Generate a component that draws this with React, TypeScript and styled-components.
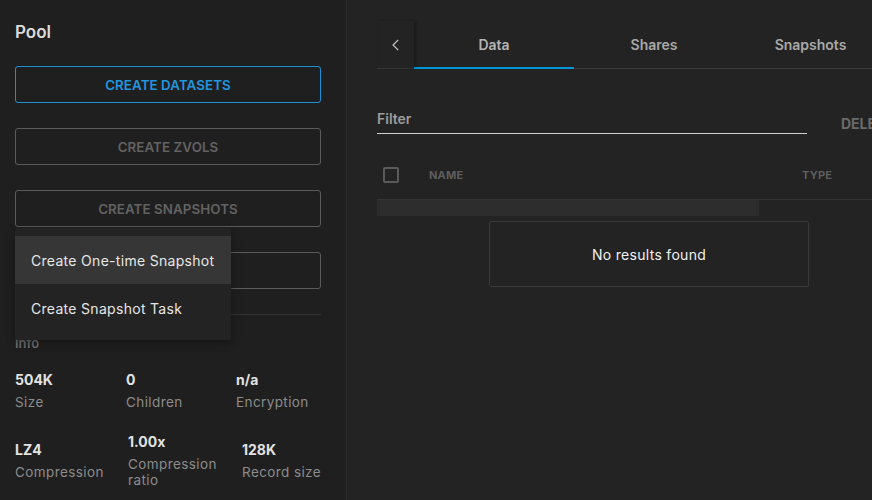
import React from "react";
import styled, { createGlobalStyle } from "styled-components";

const Global = createGlobalStyle`
  html, body { margin: 0; padding: 0; background: #232323; }
  body { font-family: Inter, "Noto Sans", sans-serif; -webkit-font-smoothing: antialiased; }
  * { box-sizing: border-box; }
`;

const Page = styled.div`
  display: flex;
  width: 872px;
  height: 500px;
  overflow: hidden;
  background: #232323;
`;

const Sidebar = styled.aside`
  flex: 0 0 347px;
  background: #1f1f1f;
  border-right: 1px solid #2c2c2c;
  padding: 20px 25px 0 15px;
  display: flex;
  flex-direction: column;
`;

const Title = styled.h2`
  margin: 0;
  font-size: 17px;
  font-weight: 600;
  line-height: 24px;
  color: #dcdcdc;
`;

const ButtonStack = styled.div`
  margin-top: 22px;
  display: flex;
  flex-direction: column;
  gap: 25px;
`;

const Anchor = styled.div`
  position: relative;
`;

const ActionButton = styled.button<{ $primary?: boolean }>`
  width: 100%;
  height: 37px;
  background: transparent;
  border: 1px solid ${(p) => (p.$primary ? "#1b8ed4" : "#5b5b5b")};
  border-radius: 3px;
  color: ${(p) => (p.$primary ? "#2196e0" : "#626262")};
  font-family: Inter, sans-serif;
  font-size: 13.3px;
  font-weight: 600;
  letter-spacing: 0.1px;
  text-transform: uppercase;
  padding: 0;
`;

const Menu = styled.div`
  position: absolute;
  left: 0;
  top: calc(100% + 1px);
  width: 216px;
  padding: 8px 0;
  background: #232323;
  border-radius: 3px;
  box-shadow: 0 3px 8px rgba(0, 0, 0, 0.35);
  z-index: 5;
`;

const MenuItem = styled.div<{ $active?: boolean }>`
  height: 48px;
  display: flex;
  align-items: center;
  padding: 0 16px;
  font-size: 14px;
  color: #e6e6e6;
  letter-spacing: 0.3px;
  background: ${(p) => (p.$active ? "#363636" : "transparent")};
`;

const Divider = styled.hr`
  margin: 25px 0 0;
  border: 0;
  border-top: 1px solid #323232;
`;

const InfoHeading = styled.div`
  margin-top: 19px;
  font-size: 13px;
  font-weight: 600;
  line-height: 18px;
  color: #6e6e6e;
`;

const StatRow = styled.div<{ $cols: string; $gapTop: number }>`
  display: grid;
  grid-template-columns: ${(p) => p.$cols};
  align-items: center;
  margin-top: ${(p) => p.$gapTop}px;
`;

const Stat = styled.div`
  display: flex;
  flex-direction: column;
`;

const StatValue = styled.div`
  font-size: 14px;
  font-weight: 700;
  line-height: 20px;
  color: #e2e2e2;
`;

const StatLabel = styled.div`
  margin-top: 4px;
  font-size: 13.5px;
  line-height: 16px;
  color: #8c8c8c;
  letter-spacing: 0.4px;
`;

const Main = styled.main`
  flex: 1;
  min-width: 0;
  padding: 21px 0 0 30px;
  overflow: hidden;
`;

const Wide = styled.div`
  width: 560px;
`;

const TabBar = styled.div`
  display: flex;
  height: 48px;
  border-bottom: 1px solid #393939;
`;

const BackButton = styled.div`
  flex: 0 0 37px;
  display: flex;
  align-items: center;
  justify-content: center;
  color: #c4c4c4;
  box-shadow: 2px 0 3px rgba(0, 0, 0, 0.25);
  position: relative;
  z-index: 1;
`;

const Tab = styled.div<{ $active?: boolean; $width: number }>`
  flex: 0 0 ${(p) => p.$width}px;
  display: flex;
  align-items: center;
  justify-content: center;
  font-size: 14px;
  font-weight: 600;
  color: ${(p) => (p.$active ? "#b4b4b4" : "#a9a9a9")};
  border-bottom: 2px solid ${(p) => (p.$active ? "#0095d5" : "transparent")};
  margin-bottom: -1px;
`;

const FilterRow = styled.div`
  display: flex;
  align-items: flex-end;
  margin-top: 41px;
`;

const FilterField = styled.div`
  width: 430px;
  height: 24px;
  border-bottom: 1px solid #cfcfcf;
  font-size: 14px;
  font-weight: 600;
  color: #9c9c9c;
  line-height: 18px;
`;

const GhostButton = styled.div`
  margin-left: 34px;
  margin-bottom: 2px;
  font-size: 14px;
  font-weight: 700;
  color: #6a6a6a;
  white-space: nowrap;
`;

const HeaderRow = styled.div`
  display: flex;
  align-items: center;
  height: 49px;
  margin-top: 17px;
  border-bottom: 1px solid #333333;
`;

const CheckBox = styled.div`
  width: 16px;
  height: 16px;
  margin-left: 6px;
  border: 2px solid #5a5a5a;
  border-radius: 2px;
`;

const HeadCell = styled.div<{ $width: number }>`
  width: ${(p) => p.$width}px;
  font-size: 11px;
  font-weight: 700;
  color: #5e5e5e;
  letter-spacing: 0.2px;
`;

const Skeleton = styled.div`
  width: 382px;
  height: 16px;
  background: #2d2d2d;
`;

const EmptyBox = styled.div`
  width: 320px;
  height: 66px;
  margin: 5px 0 0 112px;
  border: 1px solid #3a3a3a;
  border-radius: 2px;
  display: flex;
  align-items: center;
  justify-content: center;
  font-size: 14px;
  color: #f0f0f0;
  letter-spacing: 0.3px;
`;

const Chevron = () => (
  <svg width="14" height="14" viewBox="0 0 24 24" fill="none" stroke="currentColor" strokeWidth="2.2" strokeLinecap="square">
    <path d="M15 4 L7 12 L15 20" />
  </svg>
);

const stats1 = [
  { v: "504K", l: "Size" },
  { v: "0", l: "Children" },
  { v: "n/a", l: "Encryption" },
];
const stats2 = [
  { v: "LZ4", l: "Compression" },
  { v: "1.00x", l: <>Compression<br />ratio</> },
  { v: "128K", l: "Record size" },
];

export default function App() {
  return (
    <>
      <Global />
      <Page>
        <Sidebar>
          <Title>Pool</Title>
          <ButtonStack>
            <ActionButton $primary>Create Datasets</ActionButton>
            <ActionButton>Create Zvols</ActionButton>
            <Anchor>
              <ActionButton>Create Snapshots</ActionButton>
              <Menu>
                <MenuItem $active>Create One-time Snapshot</MenuItem>
                <MenuItem>Create Snapshot Task</MenuItem>
              </Menu>
            </Anchor>
            <ActionButton>Delete Pool</ActionButton>
          </ButtonStack>
          <Divider />
          <InfoHeading>Info</InfoHeading>
          <StatRow $cols="111px 110px 1fr" $gapTop={18}>
            {stats1.map((s) => (
              <Stat key={s.v}>
                <StatValue>{s.v}</StatValue>
                <StatLabel>{s.l}</StatLabel>
              </Stat>
            ))}
          </StatRow>
          <StatRow $cols="113px 114px 1fr" $gapTop={22}>
            {stats2.map((s) => (
              <Stat key={s.v}>
                <StatValue>{s.v}</StatValue>
                <StatLabel>{s.l}</StatLabel>
              </Stat>
            ))}
          </StatRow>
        </Sidebar>
        <Main>
          <Wide>
            <TabBar>
              <BackButton><Chevron /></BackButton>
              <Tab $active $width={160}>Data</Tab>
              <Tab $width={160}>Shares</Tab>
              <Tab $width={153}>Snapshots</Tab>
            </TabBar>
            <FilterRow>
              <FilterField>Filter</FilterField>
              <GhostButton>DELETE</GhostButton>
            </FilterRow>
            <HeaderRow>
              <CheckBox />
              <HeadCell $width={30} />
              <HeadCell $width={373}>NAME</HeadCell>
              <HeadCell $width={80}>TYPE</HeadCell>
            </HeaderRow>
            <Skeleton />
            <EmptyBox>No results found</EmptyBox>
          </Wide>
        </Main>
      </Page>
    </>
  );
}
